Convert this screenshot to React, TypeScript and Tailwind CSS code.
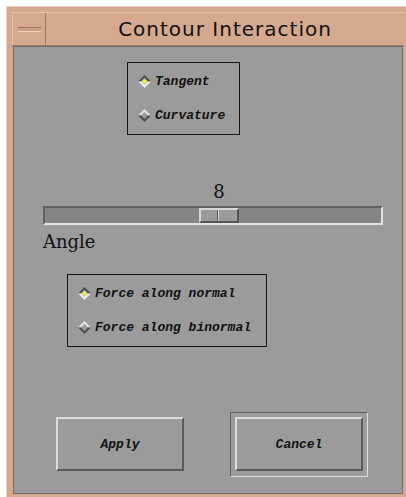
import React from "react";

const mono = { fontFamily: '"Liberation Mono", "DejaVu Sans Mono", monospace' };

function Diamond({ on }: { on: boolean }) {
  return (
    <svg width="13" height="13" viewBox="0 0 13 13" className="shrink-0">
      <polygon points="6.5,0 13,6.5 0,6.5" fill={on ? "#4f4f4f" : "#e2e2e2"} />
      <polygon points="0,6.5 13,6.5 6.5,13" fill={on ? "#ececec" : "#4f4f4f"} />
      <polygon points="6.5,3 10,6.5 6.5,10 3,6.5" fill={on ? "#c9c9b4" : "#9b9b9b"} />
      {on && <circle cx="6.5" cy="6.5" r="1.8" fill="#f4f430" />}
    </svg>
  );
}

function RadioBox({ items, w, ml, mt }: { items: string[]; w: string; ml: string; mt: string }) {
  return (
    <div className={`${w} ${ml} ${mt} h-[73px] border border-[#161616] flex flex-col pl-[10px] pt-[12px] gap-[21px]`}>
      {items.map((t, i) => (
        <div key={t} className="flex items-center gap-[4px] h-[13px]">
          <Diamond on={i === 0} />
          <span className="text-[13px] font-bold italic text-[#111] leading-none" style={mono}>
            {t}
          </span>
        </div>
      ))}
    </div>
  );
}

function Button({ label }: { label: string }) {
  return (
    <div className="w-[128px] h-[54px] bg-[#9b9b9b] border-2 border-t-[#dcdcdc] border-l-[#dcdcdc] border-b-[#5a5a5a] border-r-[#5a5a5a] flex items-center justify-center">
      <span className="text-[13px] font-bold italic text-[#111] leading-none" style={mono}>
        {label}
      </span>
    </div>
  );
}

export default function App() {
  return (
    <div className="w-[406px] h-[497px] overflow-hidden bg-white pl-[6px] pt-[6px]">
      <div className="w-[410px] h-[500px] bg-[#d4a98e] border-l border-t border-[#ecd2c1] flex flex-col pl-[5px] pt-[5px]">
        {/* title bar */}
        <div className="w-[392px] h-[34px] flex border-t border-t-[#e4c4b0] border-b border-b-[#9f7862]">
          <div className="w-[34px] h-full border-l border-l-[#e4c4b0] border-r border-r-[#9f7862] flex items-center justify-center">
            <div className="w-[23px] h-[5px] bg-[#cfa286] border-t border-t-[#9f7862] border-b border-b-[#ecd2c1]" />
          </div>
          <div className="flex-1 flex items-center justify-center">
            <span
              className="text-[20px] tracking-[1px] text-[#111] leading-none"
              style={{ fontFamily: '"DejaVu Sans", Verdana, sans-serif' }}
            >
              Contour Interaction
            </span>
          </div>
        </div>

        {/* client area */}
        <div className="ml-[1px] w-[390px] h-[448px] bg-[#9b9b9b] border border-[#6e6e6e] flex flex-col">
          <RadioBox items={["Tangent", "Curvature"]} w="w-[113px]" ml="ml-[113px]" mt="mt-[15px]" />

          <div className="ml-[185px] mt-[46px] w-[40px] text-center text-[18px] leading-[21px] text-[#111]" style={{ fontFamily: '"DejaVu Serif", serif' }}>
            8
          </div>

          <div className="ml-[29px] mt-[4px] w-[340px] h-[19px] bg-[#858585] border-2 border-t-[#626262] border-l-[#626262] border-b-[#e2e2e2] border-r-[#e2e2e2] flex">
            <div className="ml-[154px] w-[40px] h-full bg-[#9b9b9b] border-2 border-t-[#d8d8d8] border-l-[#d8d8d8] border-b-[#555555] border-r-[#555555] flex">
              <div className="w-[17px] h-full border-r border-r-[#555555]" />
              <div className="flex-1 h-full border-l border-l-[#d8d8d8]" />
            </div>
          </div>

          <div className="ml-[29px] mt-[6px] text-[18px] leading-[21px] text-[#111]" style={{ fontFamily: '"DejaVu Serif", serif' }}>
            Angle
          </div>

          <RadioBox items={["Force along normal", "Force along binormal"]} w="w-[200px]" ml="ml-[53px]" mt="mt-[22px]" />

          <div className="mt-[65px] ml-[42px] flex items-start gap-[46px]">
            <div className="mt-[5px]">
              <Button label="Apply" />
            </div>
            <div className="w-[138px] h-[65px] border border-t-[#5e5e5e] border-l-[#5e5e5e] border-b-[#dedede] border-r-[#dedede] p-[4px]">
              <Button label="Cancel" />
            </div>
          </div>
        </div>
      </div>
    </div>
  );
}
